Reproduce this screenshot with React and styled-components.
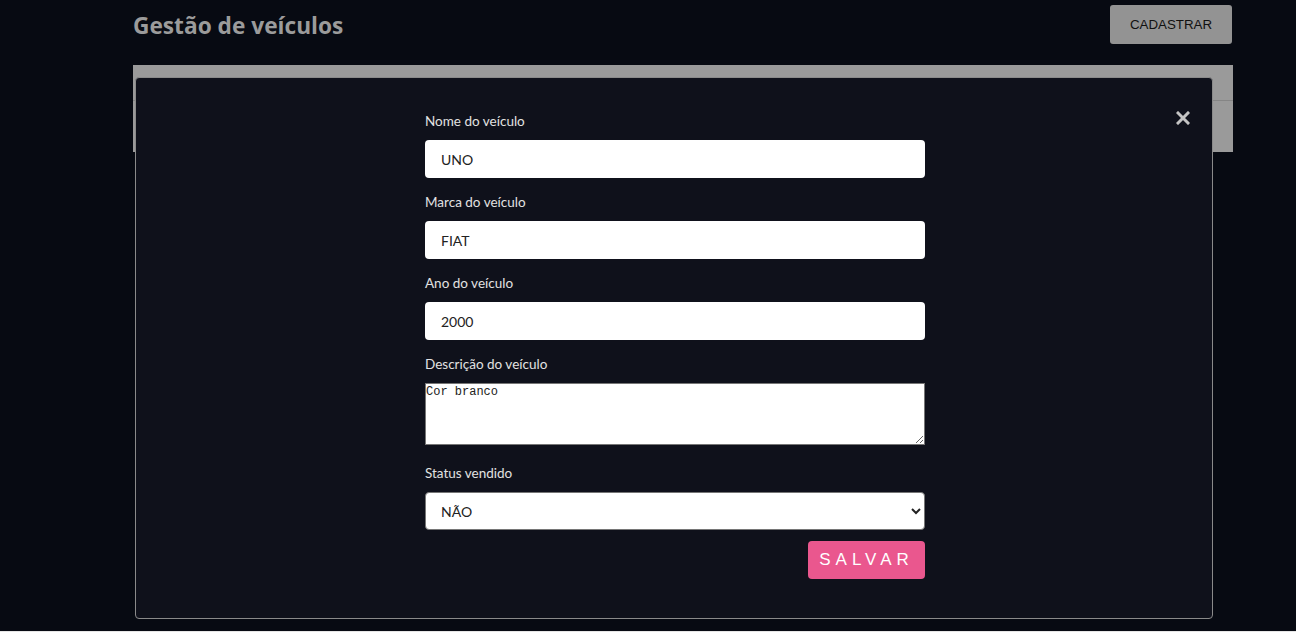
import styled, { createGlobalStyle } from "styled-components";

const GlobalStyle = createGlobalStyle`
  html, body {
    margin: 0;
    padding: 0;
    background: #e6e6e6;
  }
  * {
    box-sizing: border-box;
  }
`;

const columns = ["Veículo", "Marca", "Ano", "Descrição", "Vendido", "Ações"];
const row = ["UNO", "FIAT", "2000", "Cor branco", "Não", ""];

const App = () => {
  return (
    <Page>
      <GlobalStyle />
      <Container>
        <Header>
          <Title>Gestão de veículos</Title>
          <GrayButton>CADASTRAR</GrayButton>
        </Header>
        <Table>
          <thead>
            <tr>
              {columns.map((c) => (
                <Th key={c}>{c}</Th>
              ))}
            </tr>
          </thead>
          <tbody>
            <tr>
              {row.map((c, i) => (
                <Td key={i}>{c}</Td>
              ))}
            </tr>
          </tbody>
        </Table>

        <Modal>
          <Close aria-label="Fechar">
            <svg width="14" height="14" viewBox="0 0 14 14">
              <path
                d="M2 2 L12 12 M12 2 L2 12"
                stroke="#c4c4c4"
                strokeWidth="3"
                strokeLinecap="square"
              />
            </svg>
          </Close>
          <Form onSubmit={(e) => e.preventDefault()}>
            <Label>Nome do veículo</Label>
            <Input defaultValue="UNO" />
            <Label>Marca do veículo</Label>
            <Input defaultValue="FIAT" />
            <Label>Ano do veículo</Label>
            <Input defaultValue="2000" />
            <Label>Descrição do veículo</Label>
            <TextArea defaultValue="Cor branco" />
            <Label>Status vendido</Label>
            <Select defaultValue="nao">
              <option value="nao">NÃO</option>
              <option value="sim">SIM</option>
            </Select>
            <Actions>
              <SaveButton type="submit">SALVAR</SaveButton>
            </Actions>
          </Form>
        </Modal>
      </Container>
    </Page>
  );
};

export default App;

const Page = styled.div`
  min-height: calc(100vh - 1px);
  background: #070a12;
  font-family: Lato, "Open Sans", sans-serif;
`;

const Container = styled.div`
  position: relative;
  width: 1100px;
  margin-left: 133px;
  padding-top: 5px;
`;

const Header = styled.div`
  display: flex;
  justify-content: space-between;
  align-items: center;
  height: 39px;
  margin-bottom: 21px;
`;

const Title = styled.h1`
  margin: 2px 0 0 0;
  font-family: "Open Sans", Lato, sans-serif;
  font-size: 22.7px;
  font-weight: 700;
  color: #9b9b9b;
`;

const GrayButton = styled.button`
  width: 122px;
  height: 39px;
  margin-right: 1px;
  border: none;
  border-radius: 3px;
  background: #939393;
  color: #111;
  font-family: "Liberation Sans", Arial, sans-serif;
  font-size: 13.33px;
`;

const Table = styled.table`
  width: 100%;
  border-collapse: collapse;
  background: #9a9a9a;
  font-size: 14px;
  color: #2a2a2a;
`;

const Th = styled.th`
  height: 35px;
  text-align: center;
  font-weight: 700;
  border-bottom: 1px solid #858585;
`;

const Td = styled.td`
  height: 52px;
  text-align: center;
`;

const Modal = styled.div`
  position: absolute;
  left: 2px;
  top: 77px;
  width: 1078px;
  height: 542px;
  background: #0f111b;
  border: 1px solid #8a8a8a;
  border-radius: 4px;
  padding-top: 33px;
`;

const Close = styled.button`
  position: absolute;
  top: 33px;
  right: 22px;
  width: 14px;
  height: 14px;
  padding: 0;
  border: none;
  background: transparent;
  display: flex;
`;

const Form = styled.form`
  width: 500px;
  margin-left: 289px;
  display: flex;
  flex-direction: column;
`;

const Label = styled.label`
  display: block;
  height: 20px;
  line-height: 20px;
  margin-bottom: 9px;
  font-size: 13.5px;
  color: #e2e2e2;
`;

const Input = styled.input`
  display: block;
  width: 100%;
  height: 38px;
  margin-bottom: 14px;
  padding: 0 16px;
  border: none;
  border-radius: 4px;
  background: #fff;
  color: #222;
  font-family: Lato, "Open Sans", sans-serif;
  font-size: 14px;
  outline: none;
`;

const TextArea = styled.textarea`
  display: block;
  width: 100%;
  height: 62px;
  margin-bottom: 18px;
  padding: 1px 0;
  border: 1px solid #767676;
  border-radius: 0;
  background: #fff;
  color: #222;
  font-family: "Liberation Mono", "DejaVu Sans Mono", monospace;
  font-size: 12px;
  resize: vertical;
`;

const Select = styled.select`
  display: block;
  width: 100%;
  height: 38px;
  padding: 0 8px 0 11px;
  border: 1px solid #767676;
  border-radius: 4px;
  background: #fff;
  color: #222;
  font-family: Lato, "Open Sans", sans-serif;
  font-size: 14px;
`;

const Actions = styled.div`
  display: flex;
  justify-content: flex-end;
  margin-top: 11px;
`;

const SaveButton = styled.button`
  width: 117px;
  height: 38px;
  padding: 0;
  border: none;
  border-radius: 4px;
  background: #ea578e;
  color: #fff;
  font-family: "Liberation Sans", Arial, sans-serif;
  font-size: 17px;
  letter-spacing: 5px;
`;
